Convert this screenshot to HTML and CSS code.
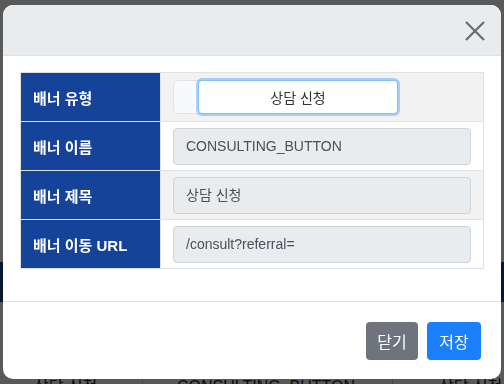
FILE: index.html
```html
<!DOCTYPE html>
<html lang="ko">
<head>
  <meta charset="UTF-8" />
  <title>배너 수정</title>
  <link rel="stylesheet" href="styles.css">
</head>
<body>

  <!-- page behind the modal -->
  <div class="page">
    <div class="page-head"></div>
    <div class="page-row">
      <div class="page-cell c1">상담 신청</div>
      <div class="page-cell c2">CONSULTING_BUTTON</div>
      <div class="page-cell c3">상담 신청</div>
    </div>
  </div>

  <div class="backdrop"></div>

  <!-- Banner edit modal -->
  <div class="modal">
    <div class="modal-header">
      <button class="close-btn" aria-label="닫기">
        <svg width="20" height="20" viewBox="0 0 20 20">
          <path d="M1 1 L19 19 M19 1 L1 19" stroke="#6b6b6b" stroke-width="2.2" fill="none" />
        </svg>
      </button>
    </div>

    <div class="modal-body">
      <table class="form-table">
        <tr class="striped">
          <th>배너 유형</th>
          <td>
            <div class="btn-group">
              <span class="seg-left"></span>
              <button class="seg-btn">상담 신청</button>
            </div>
          </td>
        </tr>
        <tr>
          <th>배너 이름</th>
          <td><div class="field">CONSULTING_BUTTON</div></td>
        </tr>
        <tr class="striped">
          <th>배너 제목</th>
          <td><div class="field">상담 신청</div></td>
        </tr>
        <tr>
          <th>배너 이동 URL</th>
          <td><div class="field">/consult?referral=</div></td>
        </tr>
      </table>
    </div>

    <div class="modal-footer">
      <button class="btn btn-grey">닫기</button>
      <button class="btn btn-blue">저장</button>
    </div>
  </div>

</body>
</html>
```

FILE: styles.css
```css
* { margin: 0; padding: 0; box-sizing: border-box; }

body {
  background: white;
  font-family: 'Liberation Sans', 'Noto Sans CJK KR', sans-serif;
  color: #212529;
  overflow: hidden;
  width: 504px;
  height: 384px;
}

/* background page */
.page {
  padding-top: 262px;
  height: 384px;
  overflow: hidden;
}

.page-head {
  height: 40px;
  background: #1c3f86;
}

.page-row {
  display: flex;
  height: 82px;
  align-items: flex-end;
  font-size: 16px;
  color: #222;
}

.page-cell {
  padding: 0 0 0 34px;
  height: 12px;
  line-height: 30px;
  white-space: nowrap;
}

.c1 { width: 143px; border-right: 1px solid #ccc; }
.c2 { width: 250px; border-right: 1px solid #ccc; }
.c3 { flex: 1; padding-left: 46px; }

.backdrop {
  position: fixed;
  top: 0; left: 0;
  width: 100%;
  height: 100%;
  background: rgba(0, 0, 0, 0.65);
}

/* modal */
.modal {
  position: fixed;
  top: 5px;
  left: 3px;
  width: 498px;
  height: 374px;
  background: white;
  border-radius: 10px;
  overflow: hidden;
  display: flex;
  flex-direction: column;
}

.modal-header {
  height: 51px;
  background: #e9ecef;
  border-bottom: 1px solid #dee2e6;
  display: flex;
  justify-content: flex-end;
  align-items: center;
  padding-right: 16px;
}

.close-btn {
  background: none;
  border: none;
  width: 20px;
  height: 20px;
  margin-top: 1px;
}

.close-btn svg { display: block; }

.modal-body {
  padding: 16px 17px 16px;
  border-bottom: 1px solid #dee2e6;
}

.form-table {
  width: 464px;
  border-collapse: collapse;
  margin-bottom: 16px;
}

.form-table th,
.form-table td {
  border: 1px solid #dee2e6;
  height: 49px;
}

.form-table th {
  width: 140px;
  background: #154399;
  color: white;
  font-size: 15px;
  font-weight: bold;
  text-align: left;
  padding-left: 12px;
}

.form-table td {
  padding: 0 12px;
  background: white;
}

.form-table tr.striped td {
  background: #f2f2f2;
}

.field {
  height: 37px;
  background: #e9ecef;
  border: 1px solid #ced4da;
  border-radius: 4px;
  padding: 0 12px;
  font-size: 14px;
  line-height: 35px;
  color: #495057;
}

.btn-group {
  display: flex;
  height: 34px;
}

.seg-left {
  width: 30px;
  background: #f8f9fa;
  border: 1px solid #dee2e6;
  border-radius: 5px 0 0 5px;
  margin-right: -5px;
}

.seg-btn {
  width: 200px;
  background: white;
  border: 1px solid #80bdff;
  border-radius: 4px;
  box-shadow: 0 0 0 2px rgba(0, 123, 255, 0.3);
  font-family: inherit;
  font-size: 14px;
  color: #333;
}

.modal-footer {
  flex: 1;
  display: flex;
  justify-content: flex-end;
  align-items: flex-start;
  gap: 9px;
  padding: 20px 20px 0 0;
}

.btn {
  height: 38px;
  border: none;
  border-radius: 4px;
  color: white;
  font-family: inherit;
  font-size: 16px;
  padding: 0;
  white-space: nowrap;
}

.btn-grey { background: #6c757d; width: 52px; }
.btn-blue { background: #1a7ffb; width: 54px; }
```
